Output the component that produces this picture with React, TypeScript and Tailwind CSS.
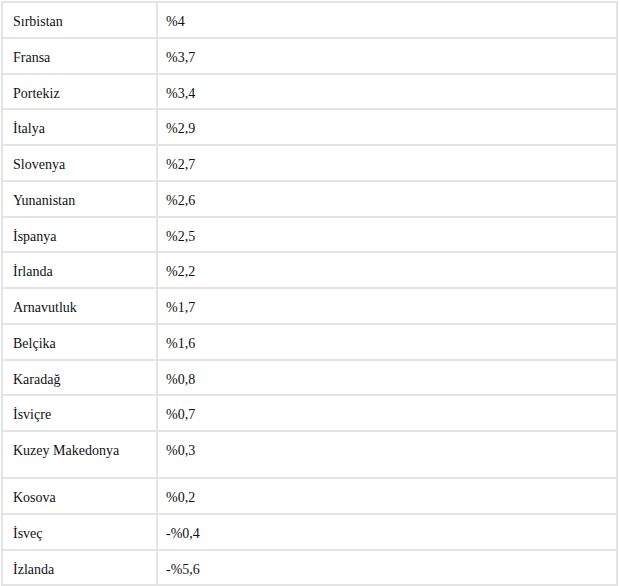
const rows: [string, string][] = [
  ["Sırbistan", "%4"],
  ["Fransa", "%3,7"],
  ["Portekiz", "%3,4"],
  ["İtalya", "%2,9"],
  ["Slovenya", "%2,7"],
  ["Yunanistan", "%2,6"],
  ["İspanya", "%2,5"],
  ["İrlanda", "%2,2"],
  ["Arnavutluk", "%1,7"],
  ["Belçika", "%1,6"],
  ["Karadağ", "%0,8"],
  ["İsviçre", "%0,7"],
  ["Kuzey Makedonya", "%0,3"],
  ["Kosova", "%0,2"],
  ["İsveç", "-%0,4"],
  ["İzlanda", "-%5,6"],
];

export default function App() {
  return (
    <div className="h-[586px] w-[620px] overflow-hidden bg-white pl-[1px] pt-[1px]">
      <div className="w-[617px] border-x-2 border-t-2 border-[#e4e4e4] font-['Liberation_Serif',serif] text-[14px] text-[#111]">
        {rows.map(([country, value]) => {
          const tall = country === "Kuzey Makedonya";
          return (
            <div
              key={country}
              className={`flex border-b-2 border-[#e4e4e4] ${tall ? "h-[47px]" : "h-[35.75px]"}`}
            >
              <div className="w-[155px] shrink-0 border-r-2 border-[#e4e4e4] pl-[10px] pt-[8px]">
                {country}
              </div>
              <div className="flex-1 pl-[8px] pt-[8px]">{value}</div>
            </div>
          );
        })}
      </div>
    </div>
  );
}
